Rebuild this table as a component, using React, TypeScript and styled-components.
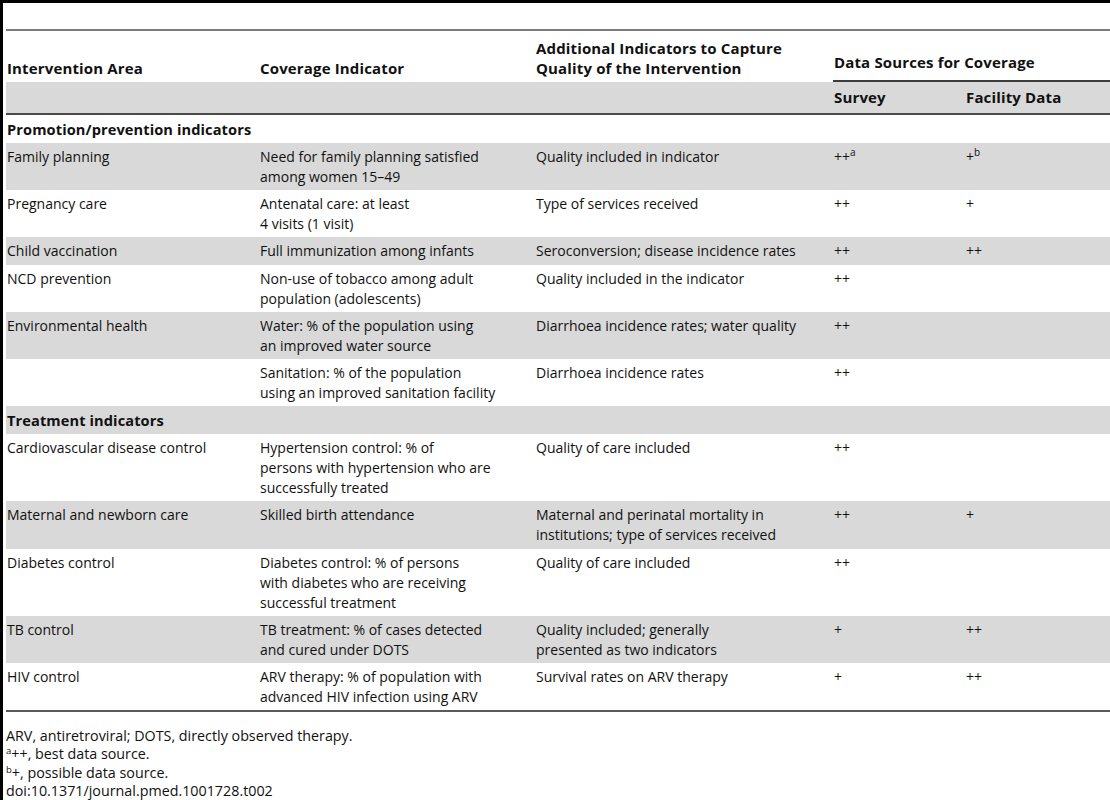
import React from 'react';
import styled, { createGlobalStyle } from 'styled-components';

const GlobalStyle = createGlobalStyle`
  html, body {
    margin: 0;
    padding: 0;
    background: #fff;
  }
  body {
    font-family: 'Open Sans', 'Liberation Sans', sans-serif;
    font-size: 14px;
    color: #111;
  }
`;

const Frame = styled.div`
  box-sizing: border-box;
  min-height: 100vh;
  border-top: 3px solid #000;
  border-left: 3px solid #000;
  padding: 26px 0 0 3px;
`;

const Table = styled.table`
  width: 100%;
  border-collapse: separate;
  border-spacing: 0;
  border-top: 2px solid #7c7c7c;
  border-bottom: 2px solid #5a5a5a;
  table-layout: fixed;
`;

const HeadCell = styled.th<{ $rule?: boolean }>`
  text-align: left;
  vertical-align: bottom;
  font-weight: 700;
  font-size: 15px;
  letter-spacing: 0.15px;
  line-height: 20px;
  white-space: nowrap;
  padding: 7px 0 ${(p) => (p.$rule ? '8px' : '4px')} 1px;
  border-bottom: ${(p) => (p.$rule ? '2px solid #3c3c3c' : 'none')};
`;

const SubHeadCell = styled.th`
  text-align: left;
  font-weight: 700;
  font-size: 15px;
  letter-spacing: 0.15px;
  line-height: 20px;
  padding: 5px 0 6px 1px;
  background: #d9d9d9;
  border-bottom: 2px solid #4a4a4a;
`;

const Row = styled.tr<{ $shade: boolean }>`
  background: ${(p) => (p.$shade ? '#d9d9d9' : 'transparent')};
`;

const Cell = styled.td`
  vertical-align: top;
  line-height: 20px;
  padding: 4px 0 3.2px 1px;
  white-space: nowrap;
`;

const SectionCell = styled.td`
  font-weight: 700;
  font-size: 14.6px;
  letter-spacing: 0.1px;
  line-height: 20px;
  padding: 4px 0 4px 1px;
`;

const Sup = styled.sup<{ $small?: boolean }>`
  display: inline-block;
  font-size: ${(p) => (p.$small ? '9.5px' : '10px')};
  line-height: 9px;
  vertical-align: ${(p) => (p.$small ? '5px' : '6px')};
`;

const Notes = styled.div`
  margin-top: 15px;
  font-size: 14.3px;
  line-height: 18.4px;
`;

const NoteLine = styled.div`
  white-space: nowrap;
`;

type DataRow = {
  area: string;
  coverage: string[];
  quality: string[];
  survey: React.ReactNode;
  facility: React.ReactNode;
};

type Section = { title: string; rows: DataRow[] };

const sections: Section[] = [
  {
    title: 'Promotion/prevention indicators',
    rows: [
      {
        area: 'Family planning',
        coverage: ['Need for family planning satisfied', 'among women 15–49'],
        quality: ['Quality included in indicator'],
        survey: (
          <>
            ++<Sup>a</Sup>
          </>
        ),
        facility: (
          <>
            +<Sup>b</Sup>
          </>
        ),
      },
      {
        area: 'Pregnancy care',
        coverage: ['Antenatal care: at least', '4 visits (1 visit)'],
        quality: ['Type of services received'],
        survey: '++',
        facility: '+',
      },
      {
        area: 'Child vaccination',
        coverage: ['Full immunization among infants'],
        quality: ['Seroconversion; disease incidence rates'],
        survey: '++',
        facility: '++',
      },
      {
        area: 'NCD prevention',
        coverage: ['Non-use of tobacco among adult', 'population (adolescents)'],
        quality: ['Quality included in the indicator'],
        survey: '++',
        facility: '',
      },
      {
        area: 'Environmental health',
        coverage: ['Water: % of the population using', 'an improved water source'],
        quality: ['Diarrhoea incidence rates; water quality'],
        survey: '++',
        facility: '',
      },
      {
        area: '',
        coverage: ['Sanitation: % of the population', 'using an improved sanitation facility'],
        quality: ['Diarrhoea incidence rates'],
        survey: '++',
        facility: '',
      },
    ],
  },
  {
    title: 'Treatment indicators',
    rows: [
      {
        area: 'Cardiovascular disease control',
        coverage: [
          'Hypertension control: % of',
          'persons with hypertension who are',
          'successfully treated',
        ],
        quality: ['Quality of care included'],
        survey: '++',
        facility: '',
      },
      {
        area: 'Maternal and newborn care',
        coverage: ['Skilled birth attendance'],
        quality: ['Maternal and perinatal mortality in', 'institutions; type of services received'],
        survey: '++',
        facility: '+',
      },
      {
        area: 'Diabetes control',
        coverage: [
          'Diabetes control: % of persons',
          'with diabetes who are receiving',
          'successful treatment',
        ],
        quality: ['Quality of care included'],
        survey: '++',
        facility: '',
      },
      {
        area: 'TB control',
        coverage: ['TB treatment: % of cases detected', 'and cured under DOTS'],
        quality: ['Quality included; generally', 'presented as two indicators'],
        survey: '+',
        facility: '++',
      },
      {
        area: 'HIV control',
        coverage: ['ARV therapy: % of population with', 'advanced HIV infection using ARV'],
        quality: ['Survival rates on ARV therapy'],
        survey: '+',
        facility: '++',
      },
    ],
  },
];

const Lines = ({ lines }: { lines: string[] }) => (
  <>
    {lines.map((line, i) => (
      <React.Fragment key={i}>
        {i > 0 && <br />}
        {line}
      </React.Fragment>
    ))}
  </>
);

const App = () => {
  let stripe = 0;

  return (
    <>
      <GlobalStyle />
      <Frame>
        <Table>
          <colgroup>
            <col style={{ width: 253 }} />
            <col style={{ width: 276 }} />
            <col style={{ width: 298 }} />
            <col style={{ width: 132 }} />
            <col />
          </colgroup>
          <thead>
            <tr>
              <HeadCell>Intervention Area</HeadCell>
              <HeadCell>Coverage Indicator</HeadCell>
              <HeadCell>
                Additional Indicators to Capture
                <br />
                Quality of the Intervention
              </HeadCell>
              <HeadCell colSpan={2} $rule>
                Data Sources for Coverage
              </HeadCell>
            </tr>
            <tr>
              <SubHeadCell />
              <SubHeadCell />
              <SubHeadCell />
              <SubHeadCell>Survey</SubHeadCell>
              <SubHeadCell>Facility Data</SubHeadCell>
            </tr>
          </thead>
          <tbody>
            {sections.map((section) => {
              const sectionShade = stripe++ % 2 === 1;
              return (
                <React.Fragment key={section.title}>
                  <Row $shade={sectionShade}>
                    <SectionCell colSpan={5}>{section.title}</SectionCell>
                  </Row>
                  {section.rows.map((row, i) => {
                    const shade = stripe++ % 2 === 1;
                    return (
                      <Row key={i} $shade={shade}>
                        <Cell>{row.area}</Cell>
                        <Cell>
                          <Lines lines={row.coverage} />
                        </Cell>
                        <Cell>
                          <Lines lines={row.quality} />
                        </Cell>
                        <Cell>{row.survey}</Cell>
                        <Cell>{row.facility}</Cell>
                      </Row>
                    );
                  })}
                </React.Fragment>
              );
            })}
          </tbody>
        </Table>
        <Notes>
          <NoteLine>ARV, antiretroviral; DOTS, directly observed therapy.</NoteLine>
          <NoteLine>
            <Sup $small>a</Sup>++, best data source.
          </NoteLine>
          <NoteLine>
            <Sup $small>b</Sup>+, possible data source.
          </NoteLine>
          <NoteLine>doi:10.1371/journal.pmed.1001728.t002</NoteLine>
        </Notes>
      </Frame>
    </>
  );
};

export default App;
